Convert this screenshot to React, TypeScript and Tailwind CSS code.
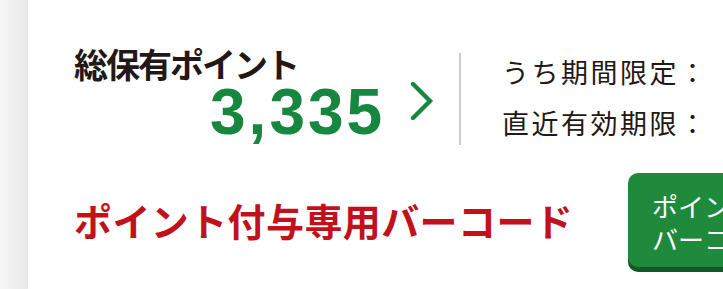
const jp = "font-['Noto_Sans_CJK_JP','Noto_Sans',sans-serif]";

function Chevron() {
  return (
    <svg width="24" height="40" viewBox="0 0 24 40" className="ml-[25px] mt-[-22px] shrink-0">
      <polyline points="3,3 20,20 3,37" fill="none" stroke="#17873f" strokeWidth="4.4" strokeLinecap="round" strokeLinejoin="miter" />
    </svg>
  );
}

export default function App() {
  return (
    <div className={`flex h-[289px] w-[723px] overflow-hidden bg-[#f3f3f3] ${jp}`}>
      <div className="w-[28px] shrink-0 bg-gradient-to-r from-[#f6f6f6] to-[#e9e9e9]" />
      <div className="flex-1 bg-white pl-[46px]">
        <div className="flex items-start pt-[47px]">
          <div className="w-[385px] shrink-0">
            <div className="text-[34px] font-bold leading-[34px] tracking-[-2px] text-[#231815]">総保有ポイント</div>
            <div className="mt-[3px] flex items-center pl-[136px]">
              <span className="font-['Liberation_Sans',Arial,sans-serif] text-[64px] font-bold leading-[56px] tracking-[3px] text-[#17873f]">
                3,335
              </span>
              <Chevron />
            </div>
          </div>
          <div className="mt-[6px] h-[92px] w-[2px] shrink-0 bg-[#cccccc]" />
          <div className="ml-[41px] flex flex-col gap-[20px] pt-[9px] text-[27px] leading-[31px] tracking-[2.5px] text-[#231815]">
            <span className="whitespace-nowrap">うち期間限定：</span>
            <span className="whitespace-nowrap">直近有効期限：</span>
          </div>
        </div>
        <div className="mt-[28px] flex items-center">
          <div className="w-[554px] shrink-0 whitespace-nowrap text-[38px] font-bold leading-[40px] tracking-[0.4px] text-[#c1121c]">ポイント付与専用バーコード</div>
          <button className="h-[94px] w-[200px] shrink-0 rounded-[10px] bg-[#1f8a3c] pl-[24px] pt-[3px] text-left text-[26px] leading-[33px] text-white shadow-[0_5px_0_#125a25]">
            <div className="whitespace-nowrap">ポイントカード</div>
            <div className="whitespace-nowrap">バーコード</div>
          </button>
        </div>
      </div>
    </div>
  );
}
